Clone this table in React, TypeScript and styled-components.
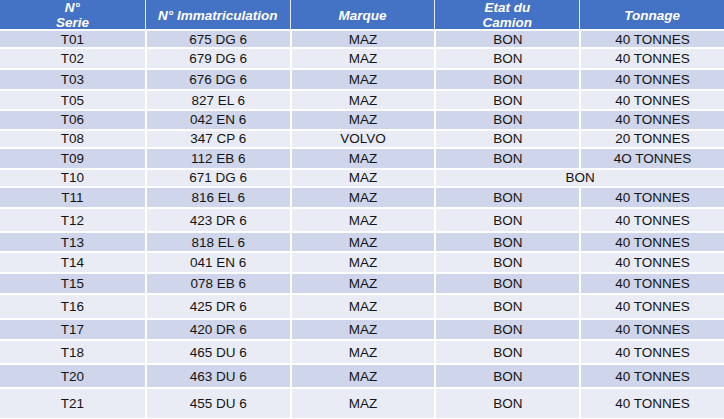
import React from "react";
import styled, { createGlobalStyle } from "styled-components";

const GlobalStyle = createGlobalStyle`
  html, body {
    margin: 0;
    padding: 0;
    background: #ffffff;
  }
  body {
    font-family: "Liberation Sans", Arial, sans-serif;
  }
`;

const headerBlue = "#4472c4";
const darkRow = "#cfd5ea";
const lightRow = "#e9ebf5";

const Table = styled.div`
  width: 724px;
  display: flex;
  flex-direction: column;
`;

const Row = styled.div<{ $height: number; $bg: string }>`
  display: grid;
  grid-template-columns: repeat(5, 1fr);
  height: ${(p) => p.$height}px;
  background: ${(p) => p.$bg};
  border-bottom: 2px solid #ffffff;
  box-sizing: border-box;
`;

const HeadCell = styled.div`
  display: flex;
  align-items: center;
  justify-content: center;
  text-align: center;
  color: #ffffff;
  font-weight: 700;
  font-style: italic;
  font-size: 13.5px;
  line-height: 15px;
  &:not(:first-child) {
    border-left: 1px solid #e8ecf6;
  }
`;

const Cell = styled.div<{ $span?: number }>`
  display: flex;
  align-items: center;
  justify-content: center;
  color: #141414;
  font-size: 13.5px;
  line-height: 15px;
  grid-column: span ${(p) => p.$span ?? 1};
  &:not(:first-child) {
    border-left: 2px solid #ffffff;
  }
`;

type Truck = {
  serie: string;
  plate: string;
  brand: string;
  state: string;
  tonnage?: string;
  height: number;
};

const trucks: Truck[] = [
  { serie: "T01", plate: "675 DG 6", brand: "MAZ", state: "BON", tonnage: "40 TONNES", height: 18 },
  { serie: "T02", plate: "679 DG 6", brand: "MAZ", state: "BON", tonnage: "40 TONNES", height: 20.5 },
  { serie: "T03", plate: "676 DG 6", brand: "MAZ", state: "BON", tonnage: "40 TONNES", height: 21.5 },
  { serie: "T05", plate: "827 EL 6", brand: "MAZ", state: "BON", tonnage: "40 TONNES", height: 20 },
  { serie: "T06", plate: "042 EN 6", brand: "MAZ", state: "BON", tonnage: "40 TONNES", height: 19.5 },
  { serie: "T08", plate: "347 CP 6", brand: "VOLVO", state: "BON", tonnage: "20 TONNES", height: 18.5 },
  { serie: "T09", plate: "112 EB 6", brand: "MAZ", state: "BON", tonnage: "4O TONNES", height: 21 },
  { serie: "T10", plate: "671 DG 6", brand: "MAZ", state: "BON", height: 17.5 },
  { serie: "T11", plate: "816 EL 6", brand: "MAZ", state: "BON", tonnage: "40 TONNES", height: 21.5 },
  { serie: "T12", plate: "423 DR 6", brand: "MAZ", state: "BON", tonnage: "40 TONNES", height: 24 },
  { serie: "T13", plate: "818 EL 6", brand: "MAZ", state: "BON", tonnage: "40 TONNES", height: 20 },
  { serie: "T14", plate: "041 EN 6", brand: "MAZ", state: "BON", tonnage: "40 TONNES", height: 21 },
  { serie: "T15", plate: "078 EB 6", brand: "MAZ", state: "BON", tonnage: "40 TONNES", height: 20.5 },
  { serie: "T16", plate: "425 DR 6", brand: "MAZ", state: "BON", tonnage: "40 TONNES", height: 25.5 },
  { serie: "T17", plate: "420 DR 6", brand: "MAZ", state: "BON", tonnage: "40 TONNES", height: 21 },
  { serie: "T18", plate: "465 DU 6", brand: "MAZ", state: "BON", tonnage: "40 TONNES", height: 24 },
  { serie: "T20", plate: "463 DU 6", brand: "MAZ", state: "BON", tonnage: "40 TONNES", height: 24 },
  { serie: "T21", plate: "455 DU 6", brand: "MAZ", state: "BON", tonnage: "40 TONNES", height: 30.5 },
];

const App = () => {
  return (
    <>
      <GlobalStyle />
      <Table>
        <Row $height={31} $bg={headerBlue}>
          <HeadCell>
            N°
            <br />
            Serie
          </HeadCell>
          <HeadCell>N° Immatriculation</HeadCell>
          <HeadCell>Marque</HeadCell>
          <HeadCell>
            Etat du
            <br />
            Camion
          </HeadCell>
          <HeadCell>Tonnage</HeadCell>
        </Row>
        {trucks.map((t, i) => (
          <Row key={t.serie} $height={t.height} $bg={i % 2 === 0 ? darkRow : lightRow}>
            <Cell>{t.serie}</Cell>
            <Cell>{t.plate}</Cell>
            <Cell>{t.brand}</Cell>
            {t.tonnage ? (
              <>
                <Cell>{t.state}</Cell>
                <Cell>{t.tonnage}</Cell>
              </>
            ) : (
              <Cell $span={2}>{t.state}</Cell>
            )}
          </Row>
        ))}
      </Table>
    </>
  );
};

export default App;
